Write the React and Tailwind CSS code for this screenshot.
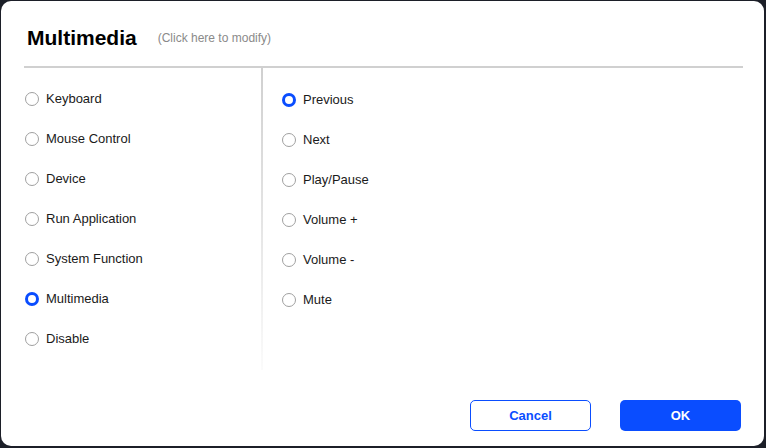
import React from "react";

const leftOptions = [
  "Keyboard",
  "Mouse Control",
  "Device",
  "Run Application",
  "System Function",
  "Multimedia",
  "Disable",
];

const rightOptions = ["Previous", "Next", "Play/Pause", "Volume +", "Volume -", "Mute"];

function Radio({ checked }) {
  return checked ? (
    <span className="box-border block h-[14px] w-[14px] shrink-0 rounded-full border-[3.5px] border-[#0a4dff] bg-white" />
  ) : (
    <span className="box-border block h-[14px] w-[14px] shrink-0 rounded-full border border-[#a0a0a0] bg-white" />
  );
}

function Option({ label, checked }) {
  return (
    <div className="flex h-[40px] items-center gap-[7px]">
      <Radio checked={checked} />
      <span className="text-[13px] text-[#1a1a1a]">{label}</span>
    </div>
  );
}

export default function App() {
  return (
    <div
      className="h-[448px] w-[766px] bg-[#1c1f28] pb-[2px] pl-[1px] pr-[2px] pt-[1px]"
      style={{ fontFamily: '"Liberation Sans", Arial, sans-serif' }}
    >
      <div className="flex h-full w-full flex-col rounded-[10px] bg-white">
        {/* header */}
        <div className="flex h-[65px] items-center pl-[26px] pt-[8px]">
          <span className="text-[21px] font-bold text-black">Multimedia</span>
          <span className="ml-[21px] mt-[1px] cursor-pointer text-[12px] text-[#8a8a8a]">
            (Click here to modify)
          </span>
        </div>
        <div className="ml-[23px] mr-[21px] h-[2px] bg-[#d0d0d0]" />

        {/* body */}
        <div className="flex pl-[24px]">
          <div className="w-[236px] pt-[11px]">
            {leftOptions.map((o) => (
              <Option key={o} label={o} checked={o === "Multimedia"} />
            ))}
          </div>
          <div className="h-[302px] w-[2px] bg-gradient-to-b from-[#d0d0d0] via-[#e4e4e4] to-[#fbfbfb]" />
          <div className="pl-[19px] pt-[12px]">
            {rightOptions.map((o) => (
              <Option key={o} label={o} checked={o === "Previous"} />
            ))}
          </div>
        </div>

        {/* footer */}
        <div className="mt-auto flex justify-end gap-[29px] pb-[15px] pr-[23px]">
          <button className="h-[31px] w-[121px] rounded-[5px] border border-[#0a4dff] bg-white text-[13px] font-bold text-[#0a4dff]">
            Cancel
          </button>
          <button className="h-[31px] w-[121px] rounded-[5px] bg-[#0a4dff] text-[13px] font-bold text-white">
            OK
          </button>
        </div>
      </div>
    </div>
  );
}
